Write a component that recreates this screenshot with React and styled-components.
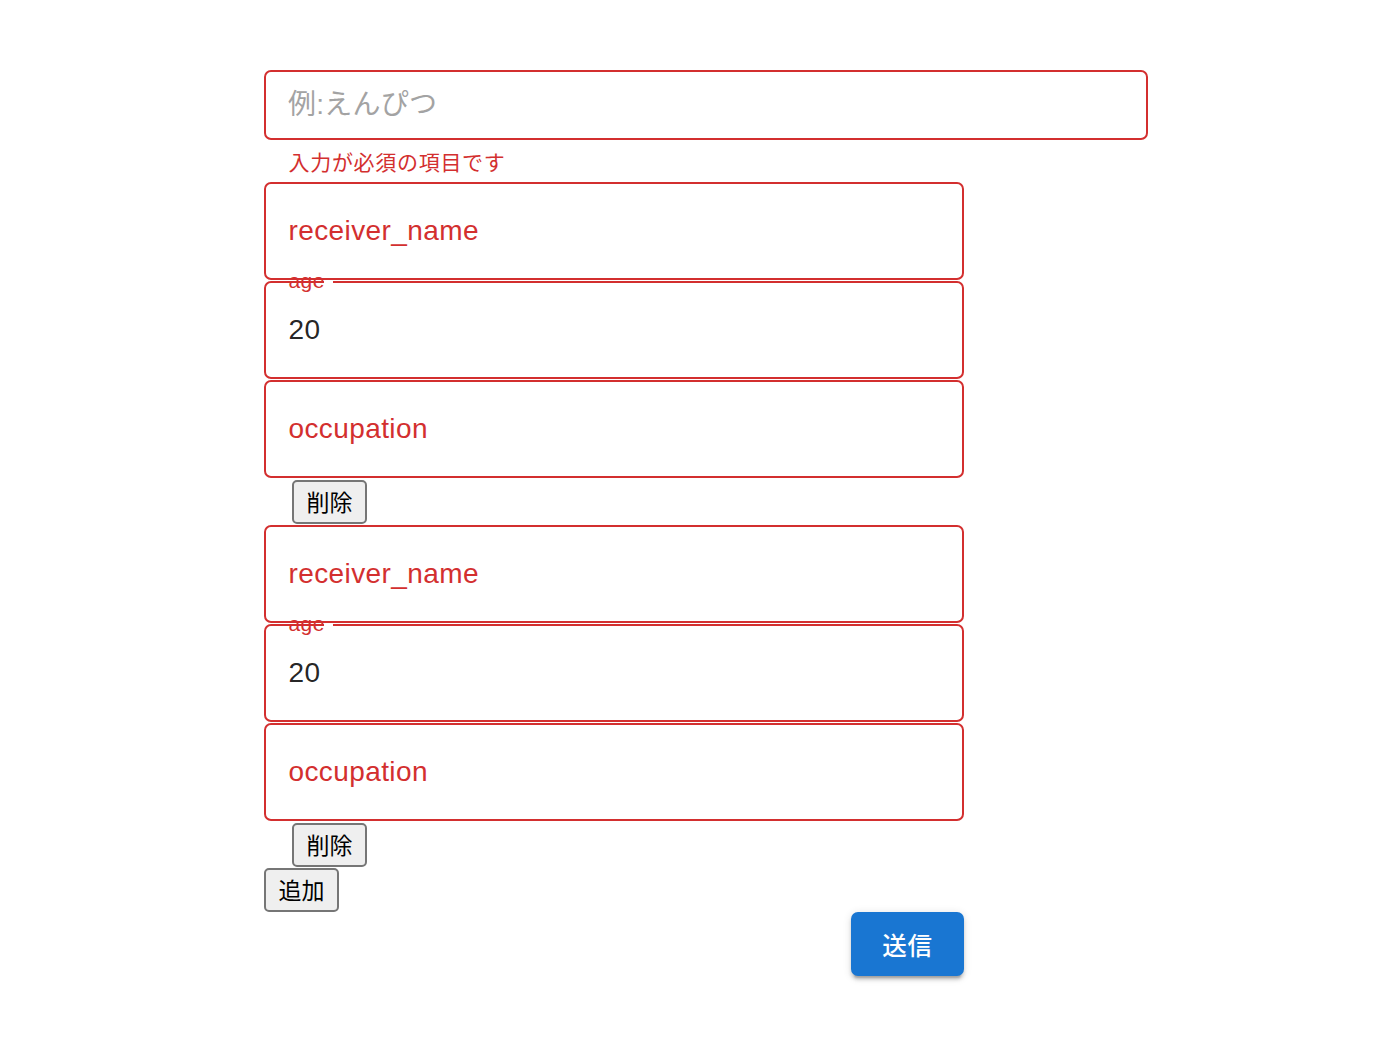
import React from 'react'
import { styled, createGlobalStyle } from 'styled-components'

const GlobalStyle = createGlobalStyle`
  body {
    margin: 0;
    background: #fff;
    font-family: "Liberation Sans", "Noto Sans CJK JP", sans-serif;
  }
`

const receivers = [
  { id: 1, age: '20' },
  { id: 2, age: '20' },
]

function Field({ label, value }) {
  if (value) {
    return (
      <FieldBox>
        <ShrunkLabel>{label}</ShrunkLabel>
        <Notch />
        <Value>{value}</Value>
      </FieldBox>
    )
  }
  return (
    <FieldBox>
      <Label>{label}</Label>
    </FieldBox>
  )
}

function App() {
  return (
    <>
      <GlobalStyle />
      <Page>
        <Form>
          <TitleInput placeholder="例:えんぴつ" />
          <HelperText>入力が必須の項目です</HelperText>
          <List>
            {receivers.map((r) => (
              <Group key={r.id}>
                <Field label="receiver_name" />
                <Field label="age" value={r.age} />
                <Field label="occupation" />
                <DeleteButton type="button">削除</DeleteButton>
              </Group>
            ))}
          </List>
          <AddButton type="button">追加</AddButton>
          <Footer>
            <SubmitButton type="button">送信</SubmitButton>
          </Footer>
        </Form>
      </Page>
    </>
  )
}

export default App

const Page = styled.div`
  padding: 70px 0 40px 264px;
`

const Form = styled.div`
  width: 884px;
  display: flex;
  flex-direction: column;
  align-items: flex-start;
`

const TitleInput = styled.input`
  box-sizing: border-box;
  width: 884px;
  height: 70px;
  border: 2.5px solid #d32f2f;
  border-radius: 7px;
  padding: 0 22px;
  font-family: "Liberation Sans", "Noto Sans CJK JP", sans-serif;
  font-size: 28px;
  letter-spacing: 0.26px;
  color: rgba(0, 0, 0, 0.87);
  outline: none;
  &::placeholder {
    color: #a3a3a3;
  }
`

const HelperText = styled.p`
  margin: 5px 0 2px 24.5px;
  font-family: "Liberation Sans", "Noto Sans CJK JP", sans-serif;
  font-size: 21px;
  line-height: 35px;
  letter-spacing: 0.7px;
  color: #d32f2f;
`

const List = styled.div`
  display: flex;
  flex-direction: column;
  gap: 1.5px;
`

const Group = styled.div`
  display: flex;
  flex-direction: column;
  align-items: flex-start;
  gap: 1px;
`

const FieldBox = styled.div`
  position: relative;
  box-sizing: border-box;
  width: 700px;
  height: 98px;
  border: 2px solid #d32f2f;
  border-radius: 7px;
  padding: 0 22.5px;
  display: flex;
  align-items: center;
  letter-spacing: 0.4px;
`

const Label = styled.span`
  font-size: 28px;
  line-height: 40px;
  color: #d32f2f;
`

const Value = styled.span`
  font-size: 28px;
  line-height: 40px;
  color: rgba(0, 0, 0, 0.87);
`

const ShrunkLabel = styled.span`
  position: absolute;
  top: -17px;
  left: 22.5px;
  font-size: 21px;
  line-height: 30px;
  color: #d32f2f;
`

const Notch = styled.span`
  position: absolute;
  top: -2px;
  left: 58px;
  width: 9px;
  height: 2px;
  background: #fff;
`

const NativeButton = styled.button`
  box-sizing: border-box;
  height: 44px;
  padding: 0 12.5px;
  border: 2px solid #767676;
  border-radius: 5px;
  background: #efefef;
  color: #000;
  font-family: "Noto Sans CJK JP", sans-serif;
  font-size: 23px;
  line-height: 1;
  cursor: pointer;
`

const DeleteButton = styled(NativeButton)`
  margin: 0.5px 0 0 28px;
`

const AddButton = styled(NativeButton)`
  margin-top: 1px;
`

const Footer = styled.div`
  width: 700px;
  display: flex;
  justify-content: flex-end;
  margin-top: 0.5px;
`

const SubmitButton = styled.button`
  width: 113px;
  height: 64px;
  border: none;
  border-radius: 7px;
  background: #1976d2;
  color: #fff;
  font-family: "Liberation Sans", "Noto Sans CJK JP", sans-serif;
  font-size: 24.5px;
  font-weight: 500;
  letter-spacing: 0.7px;
  cursor: pointer;
  box-shadow: 0 5px 2px -3.5px rgba(0, 0, 0, 0.2), 0 3.5px 3.5px 0 rgba(0, 0, 0, 0.14),
    0 1.75px 9px 0 rgba(0, 0, 0, 0.12);
`
